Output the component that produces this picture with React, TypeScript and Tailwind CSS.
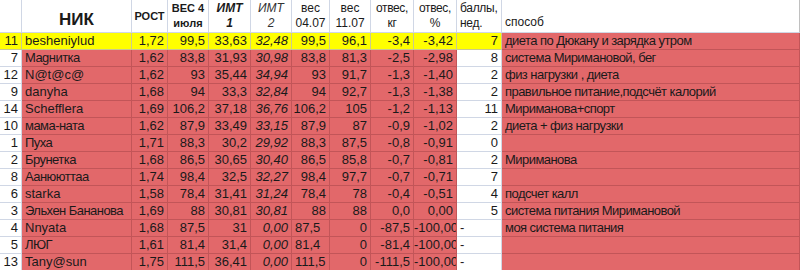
import React from 'react';

// Таблица похудения — экселевский скрин, колонки A..L
const GRID = 'grid grid-cols-[22px_110px_36px_41px_42px_41px_38px_41px_43px_43px_45px_1fr]';

const rows: string[][] = [
  ['11', 'besheniylud', '1,72', '99,5', '33,63', '32,48', '99,5', '96,1', '-3,4', '-3,42', '7', 'диета по Дюкану и зарядка утром'],
  ['7', 'Маgнитка', '1,62', '83,8', '31,93', '30,98', '83,8', '81,3', '-2,5', '-2,98', '8', 'система Миримановой, бег'],
  ['12', 'N@t@c@', '1,62', '93', '35,44', '34,94', '93', '91,7', '-1,3', '-1,40', '2', 'физ нагрузки , диета'],
  ['9', 'danyha', '1,68', '94', '33,3', '32,84', '94', '92,7', '-1,3', '-1,38', '2', 'правильное питание,подсчёт калорий'],
  ['14', 'Schefflera', '1,69', '106,2', '37,18', '36,76', '106,2', '105', '-1,2', '-1,13', '11', 'Мириманова+спорт'],
  ['10', 'мама-ната', '1,62', '87,9', '33,49', '33,15', '87,9', '87', '-0,9', '-1,02', '2', 'диета + физ нагрузки'],
  ['1', 'Пуха', '1,71', '88,3', '30,2', '29,92', '88,3', '87,5', '-0,8', '-0,91', '0', ''],
  ['2', 'Брунетка', '1,68', '86,5', '30,65', '30,40', '86,5', '85,8', '-0,7', '-0,81', '2', 'Мириманова'],
  ['8', 'Аанююттаа', '1,74', '98,4', '32,5', '32,27', '98,4', '97,7', '-0,7', '-0,71', '7', ''],
  ['6', 'starka', '1,58', '78,4', '31,41', '31,24', '78,4', '78', '-0,4', '-0,51', '4', 'подсчет калл'],
  ['3', 'Эльхен Бананова', '1,69', '88', '30,81', '30,81', '88', '88', '0,0', '0,00', '5', 'система питания Миримановой'],
  ['4', 'Nnyata', '1,68', '87,5', '31', '0,00', '87,5', '0', '-87,5', '-100,00', '-', 'моя система питания'],
  ['5', 'ЛЮГ', '1,61', '81,4', '31,4', '0,00', '81,4', '0', '-81,4', '-100,00', '-', ''],
  ['13', 'Tany@sun', '1,75', '111,5', '36,41', '0,00', '111,5', '0', '-111,5', '-100,00', '-', ''],
];

const hasCyr = (s: string) => /[а-яё]/i.test(s);

function HeadCell({ lines, className = '', align = 'center' }: { lines: string[]; className?: string; align?: 'center' | 'left' | 'bottom' }) {
  return (
    <div
      className={`h-[33px] border-r border-b border-[#d0d7e5] bg-white flex flex-col overflow-hidden leading-[15px] ${
        align === 'center'
          ? 'items-center justify-center text-center'
          : align === 'left'
          ? 'items-start justify-center pl-[3px]'
          : 'items-start justify-end pl-[3px] pb-[2px]'
      } ${className}`}
    >
      {lines.map((l, i) => (
        <span key={i} className="whitespace-nowrap">{l}</span>
      ))}
    </div>
  );
}

function DataCell({ value, col, row }: { value: string; col: number; row: number }) {
  const first = row === 0;
  const white = !first && (col === 0 || col === 10);
  const yellow = first && col !== 11;
  const bg = yellow
    ? 'bg-[#ffff00] border-[#c9c98f]'
    : white
    ? 'bg-white border-[#d0d7e5]'
    : 'bg-[#e2686a] border-[#c25558]';

  // текстовые значения в Excel прижаты влево (ник, способ, "-", вес 04.07 у последних трёх)
  const left = col === 1 || col === 11 || value === '-' || (col === 6 && row >= 11);

  return (
    <div
      className={`h-[17px] border-r border-b ${bg} ${left ? 'text-left pl-[3px]' : 'text-right pr-[3px]'} overflow-hidden whitespace-nowrap leading-[16px] ${
        col === 5 ? 'italic' : ''
      } ${hasCyr(value) ? 'tracking-[-0.55px]' : ''}`}
    >
      {value}
    </div>
  );
}

export default function App() {
  return (
    <div className="w-[800px] h-[270px] overflow-hidden bg-white text-[13px] text-[#1a1a1a] font-['Liberation_Sans',Arial,sans-serif]">
      <div className={GRID}>
        <HeadCell lines={['']} />
        <div className="h-[33px] border-r border-b border-[#d0d7e5] bg-white flex items-end justify-center pb-[3px]">
          <span className="text-[17px] font-bold leading-[18px]">НИК</span>
        </div>
        <HeadCell lines={['РОСТ']} className="text-[11px] font-bold" />
        <HeadCell lines={['ВЕС 4', 'июля']} className="text-[11px] font-bold" />
        <HeadCell lines={['ИМТ', '1']} className="text-[12px] font-bold italic" />
        <HeadCell lines={['ИМТ', '2']} className="text-[12px] italic text-[#333]" />
        <HeadCell lines={['вес', '04.07']} className="text-[12px]" />
        <HeadCell lines={['вес', '11.07']} className="text-[12px]" />
        <HeadCell lines={['отвес,', 'кг']} className="text-[12px] tracking-[-0.4px]" />
        <HeadCell lines={['отвес,', '%']} className="text-[12px] tracking-[-0.4px]" />
        <HeadCell lines={['баллы,', 'нед.']} align="left" className="text-[12px] tracking-[-0.3px]" />
        <HeadCell lines={['способ']} align="bottom" className="text-[12px] border-r-[#c0c0c0]" />

        {rows.map((r, ri) => r.map((v, ci) => <DataCell key={`${ri}-${ci}`} value={v} col={ci} row={ri} />))}
      </div>
    </div>
  );
}
